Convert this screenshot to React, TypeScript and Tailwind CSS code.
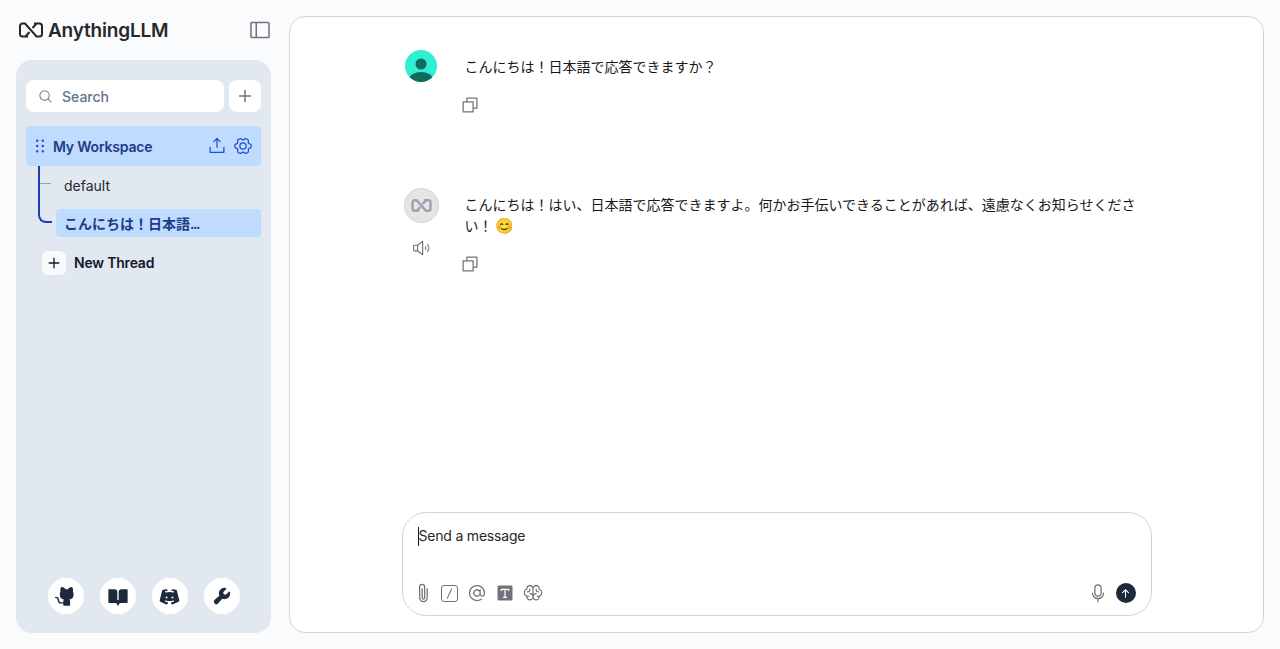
import {
  PiAt,
  PiBookOpenFill,
  PiBrain,
  PiCopy,
  PiDiscordLogoFill,
  PiDotsSixVerticalBold,
  PiGearSix,
  PiGithubLogoFill,
  PiMagnifyingGlass,
  PiMicrophone,
  PiPaperclip,
  PiPlusBold,
  PiSidebarSimple,
  PiSpeakerHigh,
  PiTextTFill,
  PiUploadSimple,
  PiWrenchFill,
  PiArrowUpBold,
} from 'react-icons/pi';

const font = 'font-["Inter","Noto_Sans_CJK_JP",sans-serif]';

const Logo = ({ className }: { className?: string }) => (
  <svg viewBox="0 0 24 16" fill="none" className={className} stroke="currentColor" strokeWidth="2">
    <path d="M9 14.5H3.5a2.5 2.5 0 0 1-2.5-2.5V4a2.5 2.5 0 0 1 2.5-2.5H6L17.5 14.5h3a2.5 2.5 0 0 0 2.5-2.5V4a2.5 2.5 0 0 0-2.5-2.5H15" />
    <path d="M6.5 14.5l4-4.5M13.5 6l4-4.5" />
  </svg>
);

const UserAvatar = () => (
  <svg viewBox="0 0 32 32" className="h-8 w-8 shrink-0">
    <defs>
      <clipPath id="avatar-clip">
        <circle cx="16" cy="16" r="16" />
      </clipPath>
    </defs>
    <g clipPath="url(#avatar-clip)">
      <rect width="32" height="32" fill="#2ef0d0" />
      <circle cx="16" cy="14" r="5.5" fill="#12695c" />
      <ellipse cx="16" cy="30" rx="12" ry="8" fill="#12695c" />
    </g>
  </svg>
);

const FooterButton = ({ children }: { children: React.ReactNode }) => (
  <div className="flex h-9 w-9 items-center justify-center rounded-full bg-white text-[#1e293b]">{children}</div>
);

const Sidebar = () => (
  <aside className="flex w-[255px] shrink-0 flex-col">
    <div className="flex h-[44px] items-center justify-between pb-4 pl-[3px]">
      <div className="flex items-center gap-[5px] text-[#27272a]">
        <Logo className="h-[16px] w-[24px]" />
        <span className="text-[19px] leading-none font-semibold tracking-[-0.2px]">AnythingLLM</span>
      </div>
      <PiSidebarSimple className="mr-[-1px] text-[24px] text-[#71717a]" />
    </div>
    <div className="flex flex-1 flex-col rounded-2xl bg-[#e2e8f0] px-[10px] pt-5 pb-[19px]">
      <div className="flex gap-[5px]">
        <div className="flex h-8 flex-1 items-center gap-[9px] rounded-lg bg-white pt-[1px] pl-3 text-sm font-medium text-[#64748b]">
          <PiMagnifyingGlass className="text-[15px] text-[#71717a]" />
          Search
        </div>
        <div className="flex h-8 w-8 items-center justify-center rounded-lg bg-white text-[#64748b]">
          <PiPlusBold className="text-[16px]" />
        </div>
      </div>
      <div className="mt-[14px] flex h-10 items-center rounded bg-[#bfdbfe] pr-2 pl-[7px] text-[#1e3a8a]">
        <PiDotsSixVerticalBold className="ml-[-3px] text-[20px] text-[#1d4ed8]" />
        <span className="ml-[3px] flex-1 pt-[1px] text-sm font-semibold tracking-[-0.2px]">My Workspace</span>
        <PiUploadSimple className="text-[20px] text-[#1d4ed8]" />
        <PiGearSix className="ml-[6px] text-[20px] text-[#1d4ed8]" />
      </div>
      <div className="relative">
        <div className="absolute top-0 left-3 h-[57px] w-[14px] rounded-bl-lg border-b-2 border-l-2 border-[#1e40af]" />
        <div className="absolute top-[17px] left-[14px] h-px w-[11px] bg-[#94a3b8]" />
        <div className="flex h-[39px] items-center pl-[38px] text-sm text-[#27272a]">default</div>
        <div className="mt-1 ml-[30px] flex h-7 items-center rounded bg-[#bfdbfe] pt-[1px] pl-2 text-sm font-semibold text-[#1e3a8a]">
          こんにちは！日本語<span className="tracking-[-1.5px]">...</span>
        </div>
      </div>
      <div className="mt-[14px] ml-4 flex items-center gap-2 text-sm font-semibold tracking-[-0.2px] text-[#0f172a]">
        <div className="flex h-6 w-6 items-center justify-center rounded-md bg-[#f8fafc]">
          <PiPlusBold className="text-[14px]" />
        </div>
        New Thread
      </div>
      <div className="mt-auto flex justify-center gap-4">
        <FooterButton>
          <PiGithubLogoFill className="text-[22px]" />
        </FooterButton>
        <FooterButton>
          <PiBookOpenFill className="text-[22px]" />
        </FooterButton>
        <FooterButton>
          <PiDiscordLogoFill className="text-[21px]" />
        </FooterButton>
        <FooterButton>
          <PiWrenchFill className="text-[20px]" />
        </FooterButton>
      </div>
    </div>
  </aside>
);

const ChatMain = () => (
  <main className="flex flex-1 flex-col items-center rounded-2xl border border-[#d4d4d8] bg-white pb-4">
    <div className="flex w-[750px] flex-1 flex-col text-sm leading-[21px] text-[#18181b]">
      <div className="mt-[33px] flex gap-7 pl-[3px]">
        <UserAvatar />
        <div className="pt-[6px]">
          <p>こんにちは！日本語で応答できますか？</p>
          <PiCopy className="mt-[18px] ml-[-5px] text-[20px] text-[#71717a]" />
        </div>
      </div>
      <div className="mt-[73px] flex gap-[26px] pl-[2px]">
        <div className="flex w-[35px] shrink-0 flex-col items-center">
          <div className="flex h-[35px] w-[35px] items-center justify-center rounded-full border border-[#d4d4d8] bg-[#e5e5e5]">
            <Logo className="h-[13px] w-[21px] stroke-[3] text-[#9ca3af]" />
          </div>
          <PiSpeakerHigh className="mt-4 text-[18px] text-[#71717a]" />
        </div>
        <div className="w-[680px] pt-[6px]">
          <p>
            こんにちは！はい、日本語で応答できますよ。何かお手伝いできることがあれば、遠慮なくお知らせください！
            <span className="ml-[2px] inline-block text-[15px]">😊</span>
          </p>
          <PiCopy className="mt-[18px] ml-[-5px] text-[20px] text-[#71717a]" />
        </div>
      </div>
    </div>
    <div className="flex h-[104px] w-[750px] flex-col justify-between rounded-3xl border border-[#d4d4d8] bg-white pt-[13px] pr-[15px] pb-[12px] pl-[15px]">
      <div className="flex items-center text-sm leading-5 tracking-[-0.2px] text-[#27272a]">
        <span className="h-[19px] w-px bg-[#18181b]" />
        Send a message
      </div>
      <div className="flex items-center justify-between text-[#71717a]">
        <div className="flex items-center gap-2">
          <PiPaperclip className="ml-[-5px] rotate-[-45deg] text-[20px]" />
          <div className="flex h-[17px] w-[17px] items-center justify-center rounded-[3px] border-[1.5px] border-[#71717a]">
            <span className="h-[11px] w-px rotate-[25deg] bg-[#71717a]" />
          </div>
          <PiAt className="ml-[1px] text-[20px]" />
          <PiTextTFill className="text-[20px]" />
          <PiBrain className="text-[20px]" />
        </div>
        <div className="flex items-center gap-2">
          <PiMicrophone className="text-[20px]" />
          <div className="flex h-5 w-5 items-center justify-center rounded-full bg-[#1e293b] text-white">
            <PiArrowUpBold className="text-[11px]" />
          </div>
        </div>
      </div>
    </div>
  </main>
);

export default function App() {
  return (
    <div className={`flex h-[649px] gap-[18px] bg-[#f9fbfd] pt-4 pr-4 pb-4 pl-4 ${font}`}>
      <Sidebar />
      <ChatMain />
    </div>
  );
}
